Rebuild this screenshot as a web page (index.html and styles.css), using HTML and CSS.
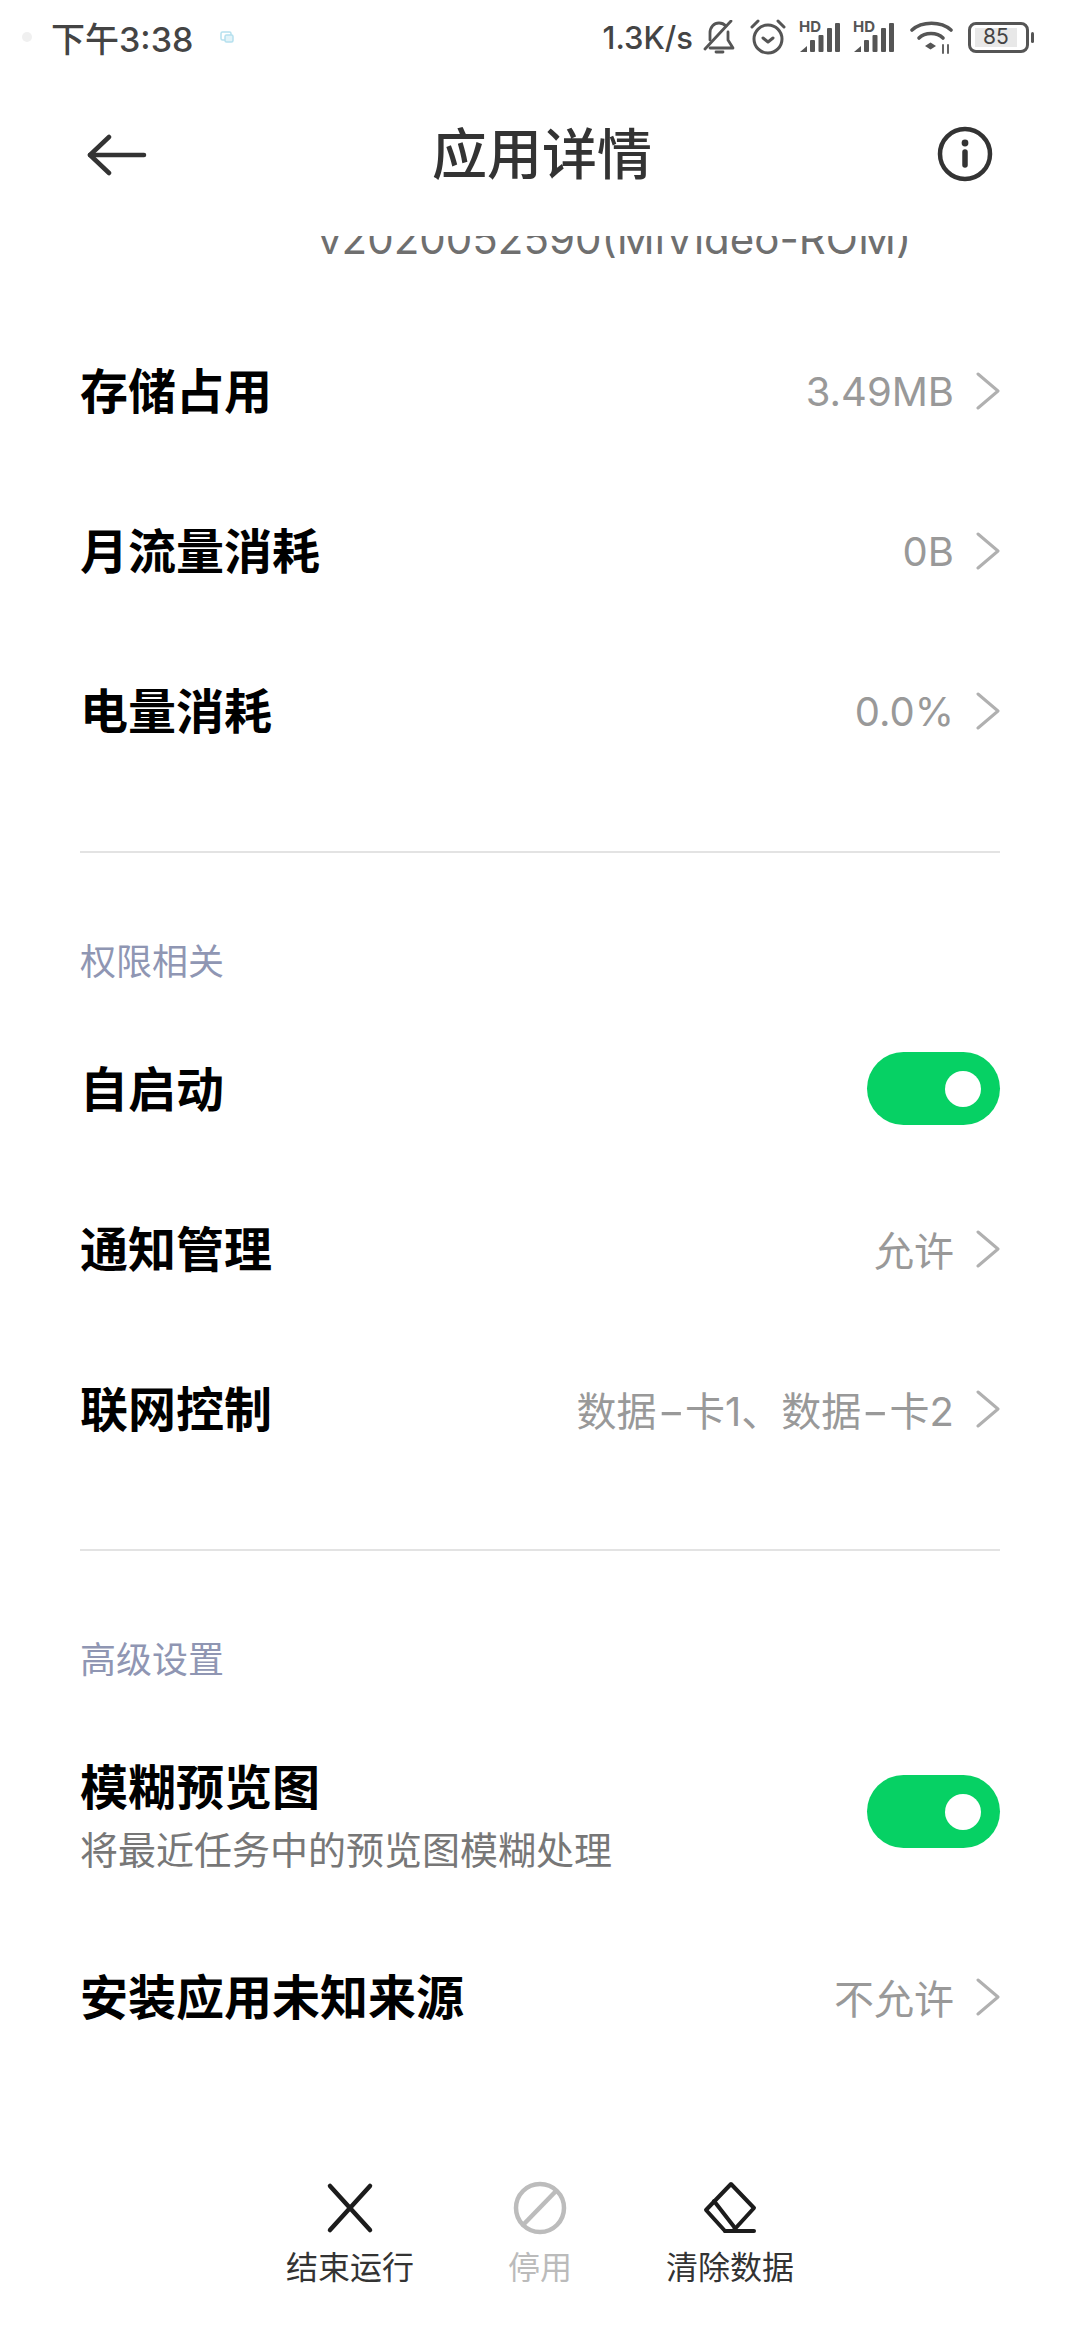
FILE: index.html
```html
<!DOCTYPE html>
<html lang="zh-CN">
<head>
  <meta charset="UTF-8">
  <meta name="viewport" content="width=device-width, initial-scale=1.0">
  <title>应用详情</title>
  <link rel="stylesheet" href="styles.css">
</head>
<body>
  <div class="page">
    <!-- Status bar -->
    <div class="status-bar">
      <div class="status-left">
        <span class="status-dot"></span>
        <span class="status-time">下午3:38</span>
        <svg class="status-app" width="14" height="12" viewBox="0 0 14 12" fill="none" stroke="#b5e0ee" stroke-width="1.5">
          <rect x="1" y="1" width="10" height="8" rx="1.5"/>
          <rect x="5" y="4" width="8" height="7" rx="1.5" fill="#e2f3f8"/>
        </svg>
      </div>
      <div class="status-right">
        <span class="status-speed">1.3K/s</span>
        <svg class="icon-bell" width="32" height="34" viewBox="0 0 32 34" fill="none" stroke="#555" stroke-width="2.8" stroke-linecap="round" stroke-linejoin="round">
          <path d="M7 20 V13 C7 7 11 3 16 3 C19 3 21 4 23 6"/>
          <path d="M25 12 V20 L30 28 H7"/>
          <path d="M28 1 L2 29"/>
          <path d="M13 32 H20"/>
        </svg>
        <svg class="icon-alarm" width="36" height="36" viewBox="0 0 36 36" fill="none" stroke="#555" stroke-width="3" stroke-linecap="round" stroke-linejoin="round">
          <circle cx="18" cy="20" r="14"/>
          <path d="M13 19 L18 23 L23 19"/>
          <path d="M2 8 L8 2"/>
          <path d="M28 2 L34 8"/>
        </svg>
        <span class="signal">
          <span class="signal-hd">HD</span>
          <svg width="41" height="32" viewBox="0 0 41 32" fill="#555">
            <path d="M1 31 L8 25 V31 Z"/>
            <rect x="11" y="19" width="5" height="12" rx="1"/>
            <rect x="19.5" y="14" width="5" height="17" rx="1"/>
            <rect x="28" y="7" width="5" height="24" rx="1"/>
            <rect x="36" y="2" width="5" height="29" rx="1"/>
          </svg>
        </span>
        <span class="signal">
          <span class="signal-hd">HD</span>
          <svg width="41" height="32" viewBox="0 0 41 32" fill="#555">
            <path d="M1 31 L8 25 V31 Z"/>
            <rect x="11" y="19" width="5" height="12" rx="1"/>
            <rect x="19.5" y="14" width="5" height="17" rx="1"/>
            <rect x="28" y="7" width="5" height="24" rx="1"/>
            <rect x="36" y="2" width="5" height="29" rx="1"/>
          </svg>
        </span>
        <svg class="icon-wifi" width="43" height="34" viewBox="0 0 43 34" fill="none" stroke="#555" stroke-width="3.6" stroke-linecap="round">
          <path d="M2 10 C12 1 31 1 41 10"/>
          <path d="M9 18 C15 12 27 12 33 18"/>
          <path d="M15 26 L20.500 22.500 L26 26 L20.500 29.500 Z" fill="#555" stroke="none"/>
          <path d="M33 25 V33 M38 25 V33" stroke-width="1.8"/>
        </svg>
        <div class="battery">
          <div class="battery-body"><span class="battery-level">85</span></div>
          <span class="battery-nub"></span>
        </div>
      </div>
    </div>

    <!-- Title bar -->
    <header class="title-bar">
      <svg class="back-icon" width="60" height="42" viewBox="0 0 60 42" fill="none" stroke="#333" stroke-width="4.5" stroke-linecap="round" stroke-linejoin="round">
        <path d="M22 3 L3 21 L22 39"/>
        <path d="M3 21 H57"/>
      </svg>
      <h1 class="page-title">应用详情</h1>
      <svg class="info-icon" width="56" height="56" viewBox="0 0 56 56" fill="none" stroke="#333" stroke-width="4.5" stroke-linecap="round">
        <circle cx="28" cy="28" r="25"/>
        <path d="M28 26 V39" stroke-width="5.5"/>
        <circle cx="28" cy="17" r="3.4" fill="#333" stroke="none"/>
      </svg>
    </header>

    <div class="version-clip">
      <div class="version">v2020052590(MiVideo-ROM)</div>
    </div>

    <section class="group group-first">
      <div class="row">
        <span class="row-title">存储占用</span>
        <span class="row-value">3.49MB</span>
        <svg class="chevron" width="24" height="38" viewBox="0 0 24 38" fill="none" stroke="#b0b0b0" stroke-width="3" stroke-linecap="round" stroke-linejoin="round"><path d="M2 2 L22 19 L2 36"/></svg>
      </div>
      <div class="row">
        <span class="row-title">月流量消耗</span>
        <span class="row-value">0B</span>
        <svg class="chevron" width="24" height="38" viewBox="0 0 24 38" fill="none" stroke="#b0b0b0" stroke-width="3" stroke-linecap="round" stroke-linejoin="round"><path d="M2 2 L22 19 L2 36"/></svg>
      </div>
      <div class="row">
        <span class="row-title">电量消耗</span>
        <span class="row-value">0.0%</span>
        <svg class="chevron" width="24" height="38" viewBox="0 0 24 38" fill="none" stroke="#b0b0b0" stroke-width="3" stroke-linecap="round" stroke-linejoin="round"><path d="M2 2 L22 19 L2 36"/></svg>
      </div>
    </section>

    <div class="divider"></div>

    <section class="group">
      <div class="group-label">权限相关</div>
      <div class="row">
        <span class="row-title">自启动</span>
        <span class="toggle"><span class="toggle-knob"></span></span>
      </div>
      <div class="row">
        <span class="row-title">通知管理</span>
        <span class="row-value">允许</span>
        <svg class="chevron" width="24" height="38" viewBox="0 0 24 38" fill="none" stroke="#b0b0b0" stroke-width="3" stroke-linecap="round" stroke-linejoin="round"><path d="M2 2 L22 19 L2 36"/></svg>
      </div>
      <div class="row">
        <span class="row-title">联网控制</span>
        <span class="row-value">数据<span class="dash">-</span>卡1、数据<span class="dash">-</span>卡2</span>
        <svg class="chevron" width="24" height="38" viewBox="0 0 24 38" fill="none" stroke="#b0b0b0" stroke-width="3" stroke-linecap="round" stroke-linejoin="round"><path d="M2 2 L22 19 L2 36"/></svg>
      </div>
    </section>

    <div class="divider"></div>

    <section class="group">
      <div class="group-label">高级设置</div>
      <div class="row row-tall">
        <div class="row-text">
          <span class="row-title">模糊预览图</span>
          <span class="row-sub">将最近任务中的预览图模糊处理</span>
        </div>
        <span class="toggle"><span class="toggle-knob"></span></span>
      </div>
      <div class="row">
        <span class="row-title">安装应用未知来源</span>
        <span class="row-value">不允许</span>
        <svg class="chevron" width="24" height="38" viewBox="0 0 24 38" fill="none" stroke="#b0b0b0" stroke-width="3" stroke-linecap="round" stroke-linejoin="round"><path d="M2 2 L22 19 L2 36"/></svg>
      </div>
    </section>

    <!-- Bottom actions -->
    <footer class="actions">
      <div class="action">
        <svg width="60" height="60" viewBox="0 0 60 60" fill="none" stroke="#1c1c1c" stroke-width="4.5" stroke-linecap="round">
          <path d="M10 8 L50 52"/>
          <path d="M50 8 L10 52"/>
        </svg>
        <span class="action-label">结束运行</span>
      </div>
      <div class="action action-disabled">
        <svg width="60" height="60" viewBox="0 0 60 60" fill="none" stroke="#bcbcbc" stroke-width="4.5" stroke-linecap="round">
          <circle cx="30" cy="30" r="24"/>
          <path d="M46 13 L13 47"/>
        </svg>
        <span class="action-label">停用</span>
      </div>
      <div class="action">
        <svg width="60" height="60" viewBox="0 0 60 60" fill="none" stroke="#1c1c1c" stroke-width="4" stroke-linecap="round" stroke-linejoin="round">
          <path d="M31 6 L54 30 L33 53 H25 L6 32 Z"/>
          <path d="M14 23 L35 50"/>
          <path d="M25 53 H54"/>
        </svg>
        <span class="action-label">清除数据</span>
      </div>
    </footer>
  </div>
</body>
</html>
```

FILE: styles.css
```css
* {
  box-sizing: border-box;
}
body {
  margin: 0;
  background: #fff;
  font-family: Inter, "Noto Sans CJK SC", sans-serif;
}
.page {
  width: 1080px;
  height: 2340px;
  display: flex;
  flex-direction: column;
  overflow: hidden;
}

/* Status bar */
.status-bar {
  height: 74px;
  padding: 0 46px 0 22px;
  display: flex;
  align-items: center;
  justify-content: space-between;
  color: #444;
}
.status-left, .status-right {
  display: flex;
  align-items: center;
}
.status-dot {
  width: 10px;
  height: 10px;
  border-radius: 50%;
  background: #f0f0f0;
  margin-right: 19px;
}
.status-time {
  font-size: 34px;
  font-weight: 500;
}
.status-app {
  margin-left: 27px;
}
.status-speed {
  font-size: 31px;
  font-weight: 500;
  margin-right: 10px;
}
.icon-alarm {
  margin-left: 15px;
}
.signal {
  position: relative;
  display: flex;
  margin-left: 13px;
}
.signal-hd {
  position: absolute;
  left: 0;
  top: -1px;
  font-size: 15px;
  font-weight: 700;
  line-height: 14px;
  color: #555;
}
.icon-wifi {
  margin-left: 16px;
}
.battery {
  display: flex;
  align-items: center;
  margin-left: 15px;
}
.battery-body {
  width: 61px;
  height: 31px;
  border: 3.5px solid #555;
  border-radius: 8px;
  padding: 3px 9px 3px 4px;
  display: flex;
}
.battery-level {
  flex: 1;
  background: #e8e8e8;
  font-size: 21px;
  line-height: 18px;
  text-align: center;
  color: #444;
}
.battery-nub {
  width: 3px;
  height: 11px;
  margin-left: 2px;
  border-radius: 2px;
  background: #555;
}

/* Title bar */
.title-bar {
  height: 160px;
  padding: 0 87px;
  display: flex;
  align-items: center;
  justify-content: space-between;
}
.back-icon {
  margin-top: 2px;
}
.page-title {
  margin: 0;
  padding-bottom: 8px;
  font-size: 55px;
  font-weight: 500;
  color: #333;
}

/* Clipped version line under the title bar */
.version-clip {
  height: 28px;
  margin-top: 2px;
  padding-left: 318px;
  display: flex;
  align-items: flex-end;
  overflow: hidden;
}
.version {
  font-size: 42px;
  line-height: 50px;
  color: #6f6f6f;
  white-space: nowrap;
}

/* Rows */
.group-first {
  margin-top: 48px;
}
.group-label {
  height: 50px;
  margin-bottom: 23px;
  padding-left: 80px;
  font-size: 36px;
  line-height: 50px;
  color: #8f96b3;
}
.row {
  height: 160px;
  padding: 0 80px;
  display: flex;
  align-items: center;
}
.row-tall {
  height: 210px;
}
.row-text {
  display: flex;
  flex-direction: column;
  margin-bottom: 4px;
}
.row-title {
  padding-bottom: 8px;
  font-size: 48px;
  font-weight: 700;
  color: #000;
  margin-right: auto;
}
.row-sub {
  font-size: 38px;
  line-height: 46px;
  color: #777;
}
.row-value {
  padding-bottom: 2px;
  font-size: 40px;
  color: #999;
}
.dash {
  display: inline-block;
  padding: 0 5px;
  transform: scaleX(1.5);
}
.chevron {
  margin: 0 0 2px 22px;
}
.divider {
  height: 2px;
  margin: 59px 80px 84px;
  background: #e3e3e3;
}

/* Switch */
.toggle {
  width: 133px;
  height: 73px;
  margin: 0 0 3px auto;
  padding-right: 19px;
  border-radius: 37px;
  background: #06d164;
  display: flex;
  align-items: center;
  justify-content: flex-end;
}
.toggle-knob {
  width: 36px;
  height: 36px;
  border-radius: 50%;
  background: #fff;
}

/* Bottom actions */
.actions {
  margin-top: auto;
  padding-bottom: 50px;
  display: flex;
  justify-content: center;
}
.action {
  width: 190px;
  display: flex;
  flex-direction: column;
  align-items: center;
  gap: 8px;
}
.action-label {
  font-size: 32px;
  line-height: 44px;
  color: #333;
}
.action-disabled .action-label {
  color: #bbb;
}
```
